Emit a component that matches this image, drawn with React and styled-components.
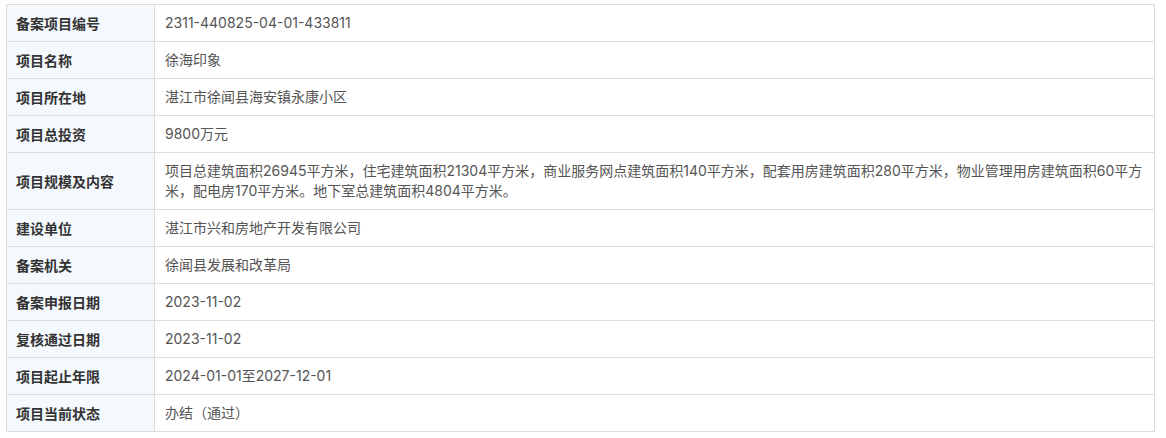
import React from "react";
import styled, { createGlobalStyle } from "styled-components";

const Global = createGlobalStyle`
  html, body { margin: 0; padding: 0; background: #ffffff; }
  body { font-family: "Inter", "Noto Sans CJK SC", sans-serif; }
`;

const Page = styled.div`
  padding: 4px 11px 0 6px;
  width: 1166px;
  box-sizing: border-box;
`;

const Table = styled.table`
  width: 100%;
  border-collapse: collapse;
  table-layout: fixed;
  border: 1px solid #dcdcdc;
`;

const Label = styled.th`
  width: 148px;
  background: #f3f9fd;
  color: #333333;
  font-family: "Noto Sans CJK SC", sans-serif;
  font-weight: bold;
  font-size: 14px;
  text-align: left;
  padding: 0 9px;
  border: 1px solid #dcdcdc;
  height: ${(p) => (p.$tall ? 56 : 36)}px;
  box-sizing: border-box;
`;

const Value = styled.td`
  color: #555555;
  font-size: 14px;
  line-height: 20px;
  padding: 8px 10px;
  border: 1px solid #dcdcdc;
  word-break: break-all;
`;

const rows = [
  ["备案项目编号", "2311-440825-04-01-433811"],
  ["项目名称", "徐海印象"],
  ["项目所在地", "湛江市徐闻县海安镇永康小区"],
  ["项目总投资", "9800万元"],
  [
    "项目规模及内容",
    "项目总建筑面积26945平方米，住宅建筑面积21304平方米，商业服务网点建筑面积140平方米，配套用房建筑面积280平方米，物业管理用房建筑面积60平方米，配电房170平方米。地下室总建筑面积4804平方米。",
    true,
  ],
  ["建设单位", "湛江市兴和房地产开发有限公司"],
  ["备案机关", "徐闻县发展和改革局"],
  ["备案申报日期", "2023-11-02"],
  ["复核通过日期", "2023-11-02"],
  ["项目起止年限", "2024-01-01至2027-12-01"],
  ["项目当前状态", "办结（通过）"],
];

export default function App() {
  return (
    <Page>
      <Global />
      <Table>
        <tbody>
          {rows.map(([k, v, tall]) => (
            <tr key={k}>
              <Label $tall={tall}>{k}</Label>
              <Value>{v}</Value>
            </tr>
          ))}
        </tbody>
      </Table>
    </Page>
  );
}
